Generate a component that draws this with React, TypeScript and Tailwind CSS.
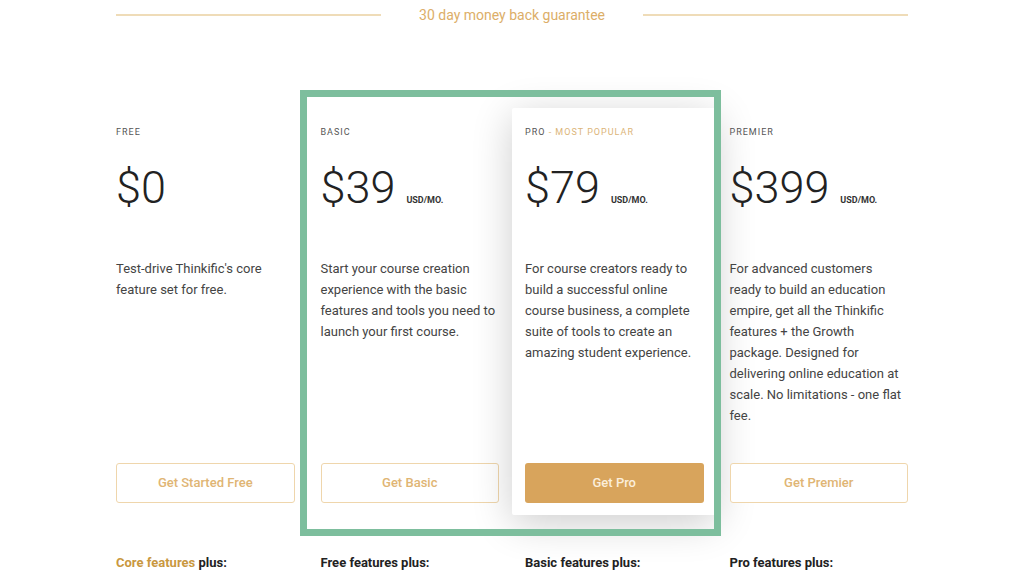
import React from "react";

const plans = [
  {
    key: "free",
    label: "FREE",
    price: "$0",
    unit: "",
    desc: "Test-drive Thinkific's core feature set for free.",
    cta: "Get Started Free",
    base: "Core",
  },
  {
    key: "basic",
    label: "BASIC",
    price: "$39",
    unit: "USD/MO.",
    desc: "Start your course creation experience with the basic features and tools you need to launch your first course.",
    cta: "Get Basic",
    base: "Free",
  },
  {
    key: "pro",
    label: "PRO",
    price: "$79",
    unit: "USD/MO.",
    desc: "For course creators ready to build a successful online course business, a complete suite of tools to create an amazing student experience.",
    cta: "Get Pro",
    base: "Basic",
  },
  {
    key: "premier",
    label: "PREMIER",
    price: "$399",
    unit: "USD/MO.",
    desc: "For advanced customers ready to build an education empire, get all the Thinkific features + the Growth package. Designed for delivering online education at scale. No limitations - one flat fee.",
    cta: "Get Premier",
    base: "Pro",
  },
];

export default function App() {
  return (
    <div className="w-[1024px] h-[576px] overflow-hidden bg-white font-['Roboto',sans-serif]">
      <div className="mx-auto w-[792px]">
        <div className="flex items-center pt-[6px]">
          <div className="h-[2px] flex-1 bg-[#efdcb8]" />
          <span className="px-[38px] text-[14px] leading-[18px] text-[#dcae68]">
            30 day money back guarantee
          </span>
          <div className="h-[2px] flex-1 bg-[#efdcb8]" />
        </div>

        <div className="relative mt-[102px] grid grid-cols-4 gap-x-[26px]">
          {plans.map((p) => {
            const popular = p.key === "pro";
            return (
              <div key={p.key} className="relative flex flex-col">
                {popular && (
                  <div className="absolute -top-[18px] -left-[13px] -right-[12px] h-[407px] bg-white rounded-[2px] shadow-[0_8px_40px_rgba(0,0,0,0.2)]" />
                )}
                <div className="relative flex flex-col">
                  <div className="h-[12px] text-[9px] leading-[12px] tracking-[1px] text-[#555]">
                    {p.label}
                    {popular && <span className="text-[#dcb579]"> - MOST POPULAR</span>}
                  </div>
                  <div className="mt-[26px] flex items-baseline">
                    <span className="text-[45px] leading-[48px] font-light text-[#222]">{p.price}</span>
                    {p.unit && (
                      <span className="ml-[11px] text-[9px] font-bold text-[#333]">{p.unit}</span>
                    )}
                  </div>
                  <p className="mt-[46px] h-[205px] w-[176px] text-[13px] leading-[21px] text-[#444]">{p.desc}</p>
                  {popular ? (
                    <button className="h-[40px] rounded-[3px] bg-[#d8a45c] text-[13px] font-medium text-[#fbeedb]">
                      {p.cta}
                    </button>
                  ) : (
                    <button className="h-[40px] rounded-[3px] border border-[#efd6ac] bg-white text-[13px] font-medium text-[#e0b574]">
                      {p.cta}
                    </button>
                  )}
                </div>
                <div className="relative mt-[51px] text-[13px] leading-[18px] font-bold text-[#222]">
                  {p.key === "free" ? (
                    <>
                      <span className="text-[#c9983f]">Core features</span> plus:
                    </>
                  ) : (
                    <>{p.base} features plus:</>
                  )}
                </div>
              </div>
            );
          })}

          <div className="pointer-events-none absolute -top-[36px] left-[184px] h-[446px] w-[421px] border-[7px] border-[#7dbe9d]" />
        </div>
      </div>
    </div>
  );
}
